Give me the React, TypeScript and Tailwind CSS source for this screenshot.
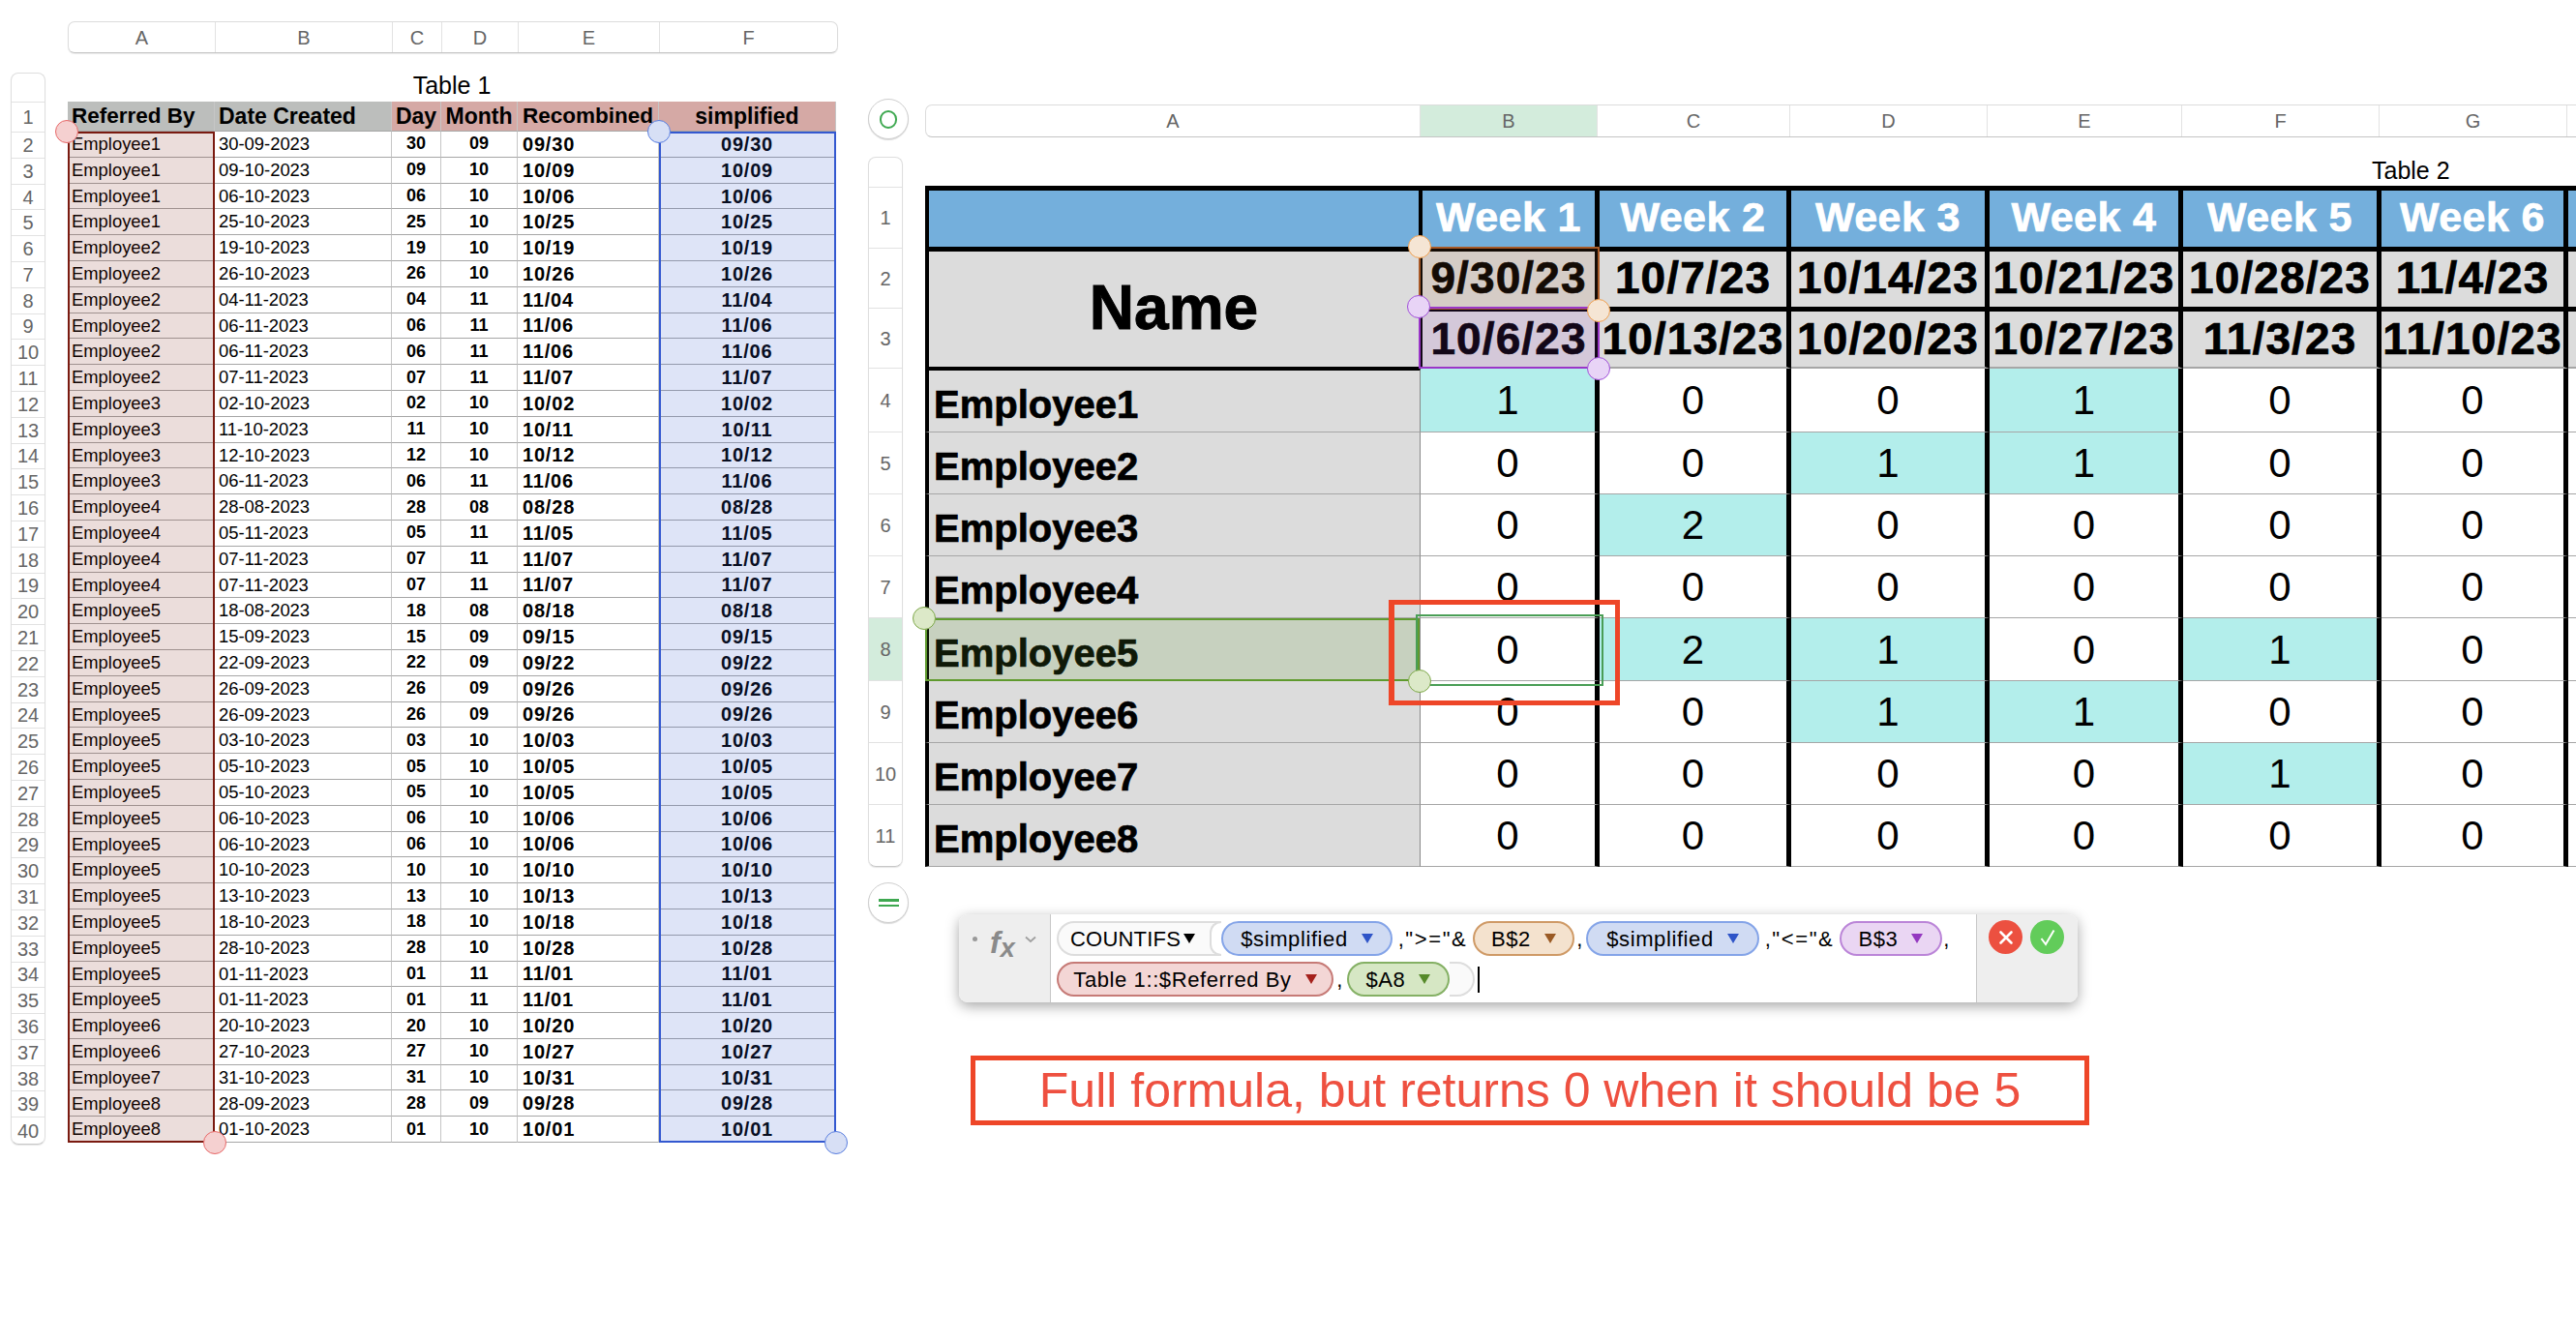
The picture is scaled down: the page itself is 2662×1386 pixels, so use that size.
import type { ReactNode } from "react"

const referrals: [string, string][] = [
  ["Employee1", "30-09-2023"],
  ["Employee1", "09-10-2023"],
  ["Employee1", "06-10-2023"],
  ["Employee1", "25-10-2023"],
  ["Employee2", "19-10-2023"],
  ["Employee2", "26-10-2023"],
  ["Employee2", "04-11-2023"],
  ["Employee2", "06-11-2023"],
  ["Employee2", "06-11-2023"],
  ["Employee2", "07-11-2023"],
  ["Employee3", "02-10-2023"],
  ["Employee3", "11-10-2023"],
  ["Employee3", "12-10-2023"],
  ["Employee3", "06-11-2023"],
  ["Employee4", "28-08-2023"],
  ["Employee4", "05-11-2023"],
  ["Employee4", "07-11-2023"],
  ["Employee4", "07-11-2023"],
  ["Employee5", "18-08-2023"],
  ["Employee5", "15-09-2023"],
  ["Employee5", "22-09-2023"],
  ["Employee5", "26-09-2023"],
  ["Employee5", "26-09-2023"],
  ["Employee5", "03-10-2023"],
  ["Employee5", "05-10-2023"],
  ["Employee5", "05-10-2023"],
  ["Employee5", "06-10-2023"],
  ["Employee5", "06-10-2023"],
  ["Employee5", "10-10-2023"],
  ["Employee5", "13-10-2023"],
  ["Employee5", "18-10-2023"],
  ["Employee5", "28-10-2023"],
  ["Employee5", "01-11-2023"],
  ["Employee5", "01-11-2023"],
  ["Employee6", "20-10-2023"],
  ["Employee6", "27-10-2023"],
  ["Employee7", "31-10-2023"],
  ["Employee8", "28-09-2023"],
  ["Employee8", "01-10-2023"],
]

// last column runs off the right edge of the window, only its end date peeks in
const weeks = ["Week 1", "Week 2", "Week 3", "Week 4", "Week 5", "Week 6", ""]
const weekStarts = ["9/30/23", "10/7/23", "10/14/23", "10/21/23", "10/28/23", "11/4/23", ""]
const weekEnds = ["10/6/23", "10/13/23", "10/20/23", "10/27/23", "11/3/23", "11/10/23", "11/17/23"]

const counts: [string, number[]][] = [
  ["Employee1", [1, 0, 0, 1, 0, 0]],
  ["Employee2", [0, 0, 1, 1, 0, 0]],
  ["Employee3", [0, 2, 0, 0, 0, 0]],
  ["Employee4", [0, 0, 0, 0, 0, 0]],
  ["Employee5", [0, 2, 1, 0, 1, 0]],
  ["Employee6", [0, 0, 1, 1, 0, 0]],
  ["Employee7", [0, 0, 0, 0, 1, 0]],
  ["Employee8", [0, 0, 0, 0, 0, 0]],
]

const table2Rows = ["h-[63px]", "h-[62px]", "h-[62px]", "h-[66px]", "h-[64px]", "h-[64px]", "h-[64px]", "h-[65px]", "h-[64px]", "h-[64px]", "h-[63px]"]

function Handle({ className }: { className: string }) {
  return <div className={`pointer-events-none absolute z-30 h-6 w-6 -translate-x-1/2 -translate-y-1/2 rounded-full border ${className}`} />
}

function Arrow({ color }: { color: string }) {
  return (
    <svg width="12" height="10" viewBox="0 0 12 10" className="shrink-0">
      <polygon points="0,0 12,0 6,10" fill={color} />
    </svg>
  )
}

function Pill({ label, color, className }: { label: string; color: string; className: string }) {
  return (
    <div className={`flex h-9 shrink-0 items-center justify-center gap-[14px] rounded-full border-2 tracking-[0.6px] ${className}`}>
      <span>{label}</span>
      <Arrow color={color} />
    </div>
  )
}

function Sep({ children, className }: { children: ReactNode; className: string }) {
  return <span className={`shrink-0 whitespace-nowrap text-center tracking-[1.6px] ${className}`}>{children}</span>
}

function Table1() {
  const cols = [
    { label: "A", w: "w-[152px]" },
    { label: "B", w: "w-[183px]" },
    { label: "C", w: "w-[51px]" },
    { label: "D", w: "w-[79px]" },
    { label: "E", w: "w-[146px]" },
    { label: "F", w: "w-[183px]" },
  ]
  const cell = "flex items-center border-b border-r border-b-[#a6a6a6] border-r-[#c6c6c6] text-black whitespace-nowrap overflow-visible"

  return (
    <div className="w-[853px] shrink-0">
      <div className="ml-[59px] flex h-[33px] w-[796px] overflow-hidden rounded-[7px] border border-[#dcdcdc] border-b-[#c4c4c4] shadow-[0_1px_1px_rgba(0,0,0,0.08)]">
        {cols.map((c) => (
          <div key={c.label} className={`flex items-center justify-center border-r border-[#e2e2e2] text-[20px] text-[#666] last:border-r-0 ${c.w}`}>
            {c.label}
          </div>
        ))}
      </div>

      <div className="mt-[20px] flex items-start">
        <div className="w-[36px] overflow-hidden rounded-[8px] border border-[#dedede] border-b-[#c8c8c8] shadow-[0_1px_1px_rgba(0,0,0,0.1)]">
          <div className="h-[30px] border-b border-[#e2e2e2]" />
          <div className="flex h-[31px] items-center justify-center border-b border-[#e2e2e2] text-[20px] text-[#666]">1</div>
          {referrals.map((_, i) => (
            <div key={i} className="flex h-[26.8px] items-center justify-center border-b border-[#e2e2e2] text-[20px] text-[#666] last:border-b-0">
              {i + 2}
            </div>
          ))}
        </div>

        <div className="ml-[23px] w-[794px]">
          <div className="flex h-[30px] items-center justify-center pb-[3px] text-[25px] text-black">Table 1</div>
          <div className="relative grid grid-cols-[152px_183px_51px_79px_146px_183px] grid-rows-[31px_repeat(39,26.8px)]">
            <div className={`${cell} bg-[#bcbebc] pl-[4px] text-[22.5px] font-bold`}>Referred By</div>
            <div className={`${cell} bg-[#bcbebc] pl-[4px] text-[23px] font-bold`}>Date Created</div>
            <div className={`${cell} justify-center bg-[#d5a9a5] text-[23px] font-bold`}>Day</div>
            <div className={`${cell} justify-center bg-[#d5a9a5] text-[23px] font-bold`}>Month</div>
            <div className={`${cell} bg-[#d5a9a5] pl-[5px] text-[22.5px] font-bold`}>Recombined</div>
            <div className={`${cell} justify-center bg-[#d5a9a5] text-[23px] font-bold`}>simplified</div>

            {referrals.map(([name, date], i) => {
              const [day, month] = date.split("-")
              return (
                <div key={i} className="contents">
                  <div className={`${cell} pl-[4px] text-[18.4px]`}>{name}</div>
                  <div className={`${cell} pl-[4px] text-[18.4px]`}>{date}</div>
                  <div className={`${cell} justify-center text-[18px] font-bold`}>{day}</div>
                  <div className={`${cell} justify-center text-[18px] font-bold`}>{month}</div>
                  <div className={`${cell} pl-[5px] text-[20px] font-bold tracking-[0.8px]`}>{`${month}/${day}`}</div>
                  <div className={`${cell} justify-center text-[20px] font-bold tracking-[0.8px]`}>{`${month}/${day}`}</div>
                </div>
              )
            })}

            <div className="pointer-events-none absolute left-0 top-[31px] h-[1045px] w-[152px] border-[2.5px] border-[#7a1a10] bg-[#7a1a10]/15" />
            <div className="pointer-events-none absolute left-[611px] top-[31px] h-[1045px] w-[183px] border-[2.5px] border-[#3358d0] bg-[#3358d0]/16" />
            <Handle className="left-[-1px] top-[31px] border-[#e86a6a] bg-[#f5d0d0]" />
            <Handle className="left-[152px] top-[1076px] border-[#e86a6a] bg-[#f5d0d0]" />
            <Handle className="left-[611px] top-[31px] border-[#5a7fe0] bg-[#d7dff5]" />
            <Handle className="left-[794px] top-[1076px] border-[#5a7fe0] bg-[#d7dff5]" />
          </div>
        </div>
      </div>
    </div>
  )
}

function Table2() {
  const weekCell = "flex items-center justify-center border-r-[5px] border-black whitespace-nowrap"
  const cols = [
    { label: "A", w: "w-[511px]", on: false },
    { label: "B", w: "w-[183px]", on: true },
    { label: "C", w: "w-[199px]", on: false },
    { label: "D", w: "w-[204px]", on: false },
    { label: "E", w: "w-[201px]", on: false },
    { label: "F", w: "w-[204px]", on: false },
    { label: "G", w: "w-[194px]", on: false },
  ]

  return (
    <div className="ml-[33px] mt-[80px] shrink-0">
      <div className="flex items-start">
        <div className="flex h-[42px] w-[42px] items-center justify-center rounded-full border border-[#cfcfcf] bg-white shadow-[0_1px_1px_rgba(0,0,0,0.15)]">
          <div className="h-[19px] w-[18px] rounded-full border-2 border-[#3ea850]" />
        </div>
        <div className="ml-[17px] mt-[6px] flex h-[34px] w-[1900px] overflow-hidden rounded-l-[7px] border border-r-0 border-[#dcdcdc] border-b-[#c4c4c4]">
          {cols.map((c) => (
            <div
              key={c.label}
              className={`flex items-center justify-center border-r border-[#e2e2e2] text-[20px] text-[#666] ${c.w} ${c.on ? "bg-[#d3ecdc]" : ""}`}
            >
              {c.label}
            </div>
          ))}
        </div>
      </div>

      <div className="mt-[18px] flex items-start">
        <div className="w-[36px] overflow-hidden rounded-[8px] border border-[#dedede] border-b-[#c8c8c8] shadow-[0_1px_1px_rgba(0,0,0,0.1)]">
          <div className="h-[31px] border-b border-[#e2e2e2]" />
          {table2Rows.map((h, i) => (
            <div
              key={i}
              className={`flex items-center justify-center border-b border-[#e2e2e2] text-[20px] text-[#666] last:border-b-0 ${h} ${i === 7 ? "bg-[#d3ecdc]" : ""}`}
            >
              {i + 1}
            </div>
          ))}
        </div>

        <div className="ml-[23px]">
          <div className="flex h-[30px] items-center pl-[1495px] text-[25px] text-black">Table 2</div>
          <div className="relative grid grid-cols-[512px_185px_198px_205px_200px_205px_193px_206px] grid-rows-[68px_62px_59px_66px_64px_64px_64px_65px_64px_64px_64px]">
            <div className="border-y-[5px] border-l-4 border-r-2 border-black bg-[#74afdc]" />
            {weeks.map((w, i) => (
              <div
                key={i}
                className={`${weekCell} border-y-[5px] bg-[#74afdc] pb-[3px] text-[43px] font-bold tracking-[0.4px] text-white [-webkit-text-stroke:0.7px_#ffffff] ${i === 0 ? "border-l-2" : ""}`}
              >
                {w}
              </div>
            ))}

            <div className="row-span-2 flex items-center justify-center border-b-2 border-l-4 border-r-2 border-black bg-[#dcdcdc] pb-[3px] text-[64px] font-bold text-black [-webkit-text-stroke:1px_#000000]">
              Name
            </div>
            {weekStarts.map((d, i) => (
              <div
                key={i}
                className={`${weekCell} border-b-[5px] bg-[#dcdcdc] pb-[3px] text-[46px] font-bold tracking-[1.1px] text-black [-webkit-text-stroke:0.7px_#000000] ${i === 0 ? "border-l-2" : ""}`}
              >
                {d}
              </div>
            ))}
            {weekEnds.map((d, i) => (
              <div
                key={i}
                className={`${weekCell} border-b-2 border-b-[#a6a6a6] bg-[#dcdcdc] text-[46px] font-bold tracking-[1.1px] text-black [-webkit-text-stroke:0.7px_#000000] ${i === 0 ? "border-l-2" : ""}`}
              >
                {d}
              </div>
            ))}

            {counts.map(([name, values], r) => (
              <div key={name} className="contents">
                <div
                  className={`flex items-end border-b border-l-4 border-r border-b-[#a6a6a6] border-l-black border-r-[#888888] bg-[#dcdcdc] pb-[8px] pl-[5px] text-[40px] font-bold leading-[40px] text-black [-webkit-text-stroke:0.7px_#000000] ${r === 0 ? "border-t-2 border-t-black" : ""}`}
                >
                  {name}
                </div>
                {values.map((v, i) => (
                  <div
                    key={i}
                    className={`flex items-center justify-center border-b border-r-[5px] border-b-[#a6a6a6] border-r-black text-[42px] text-black ${v > 0 ? "bg-[#b3eeeb]" : "bg-white"}`}
                  >
                    {v}
                  </div>
                ))}
                <div className="border-b border-b-[#a6a6a6]" />
              </div>
            ))}

            <div className="pointer-events-none absolute left-[510px] top-[63px] h-[65px] w-[187px] border-[2.5px] border-[#a85a28] bg-[#a85a28]/12" />
            <div className="pointer-events-none absolute left-[510px] top-[125px] h-[64px] w-[187px] border-[2.5px] border-[#9a36c8] bg-[#9a36c8]/12" />
            <div className="pointer-events-none absolute left-0 top-[447px] h-[65px] w-[511px] border-2 border-[#5f9a2e] bg-[#5f9a2e]/16" />
            <div className="pointer-events-none absolute left-[507px] top-[443px] h-[74px] w-[194px] border-2 border-[#4a9e56]" />
            <div className="pointer-events-none absolute left-[479px] top-[428px] z-20 h-[109px] w-[239px] border-y-[5px] border-l-[6px] border-r-[5px] border-[#ee4628]" />
            <Handle className="left-[511px] top-[63px] border-[#f0a050] bg-[#f5e5d4]" />
            <Handle className="left-[696px] top-[129px] border-[#f0a050] bg-[#f5e5d4]" />
            <Handle className="left-[510px] top-[125px] border-[#a050d8] bg-[#e8d4f6]" />
            <Handle className="left-[696px] top-[189px] border-[#a050d8] bg-[#e8d4f6]" />
            <Handle className="left-[-1px] top-[447px] border-[#7ea84a] bg-[#dce9c8]" />
            <Handle className="left-[511px] top-[512px] border-[#7ea84a] bg-[#dce9c8]" />
          </div>
        </div>
      </div>

      <div className="mt-[16px] flex items-start">
        <div className="flex h-[42px] w-[42px] flex-col items-center justify-center gap-[3px] rounded-full border border-[#cfcfcf] bg-white shadow-[0_1px_1px_rgba(0,0,0,0.15)]">
          <div className="h-[2.5px] w-[21px] bg-[#3ea850]" />
          <div className="h-[2.5px] w-[21px] bg-[#3ea850]" />
        </div>
        <FormulaBar />
      </div>

      <div className="ml-[106px] mt-[55px] flex h-[72px] w-[1156px] items-center justify-center border-[5px] border-[#ee4628] text-[50px] text-[#ee5040]">
        Full formula, but returns 0 when it should be 5
      </div>
    </div>
  )
}

function FormulaBar() {
  return (
    <div className="ml-[52px] mt-[33px] flex h-[91px] w-[1156px] overflow-hidden rounded-[9px] bg-white text-[22px] text-black shadow-[0_4px_14px_rgba(0,0,0,0.35)]">
      <div className="flex w-[95px] shrink-0 items-start border-r border-[#c8c8c8] bg-[#eeeeee] pl-[14px] pt-[13px]">
        <div className="mt-[10px] h-[5px] w-[5px] rounded-full bg-[#999]" />
        <div className="ml-[13px] flex items-start font-bold italic leading-none text-[#8a8a8a]">
          <span className="text-[32px]">f</span>
          <span className="mt-[9px] text-[27px]">x</span>
        </div>
        <svg width="14" height="8" viewBox="0 0 14 8" className="ml-[9px] mt-[9px]">
          <path d="M2 1.5 L7 6 L12 1.5" fill="none" stroke="#a0a0a0" strokeWidth="1.8" />
        </svg>
      </div>

      <div className="flex min-w-0 flex-1 flex-col gap-[6px] pl-[6px] pt-[7px]">
        <div className="flex h-9 items-center">
          <div className="relative flex h-9 w-[170px] shrink-0 items-center gap-[3px] rounded-l-full border-y-2 border-l-2 border-[#dddddd] bg-[#fafafa] pl-[12px] tracking-[0.2px]">
            <span>COUNTIFS</span>
            <Arrow color="#000000" />
            <div className="absolute right-0 top-[-2px] h-9 w-[12px] rounded-l-full border-y-2 border-l-2 border-[#dddddd] bg-white" />
          </div>
          <Pill label="$simplified" color="#2f55c8" className="w-[177px] border-[#84a4e8] bg-[#d0dbf3]" />
          <Sep className="w-[83px]">,"&gt;="&amp;</Sep>
          <Pill label="B$2" color="#9a5a24" className="w-[105px] border-[#cf9a66] bg-[#f4e2ce]" />
          <Sep className="w-[12px]">,</Sep>
          <Pill label="$simplified" color="#2f55c8" className="w-[179px] border-[#84a4e8] bg-[#d0dbf3]" />
          <Sep className="w-[83px]">,"&lt;="&amp;</Sep>
          <Pill label="B$3" color="#9438c0" className="w-[106px] border-[#bb85d8] bg-[#ead6f3]" />
          <Sep className="w-[10px]">,</Sep>
        </div>
        <div className="flex h-9 items-center">
          <Pill label="Table 1::$Referred By" color="#a5211c" className="w-[286px] border-[#c67a76] bg-[#f3d6d5]" />
          <Sep className="w-[14px]">,</Sep>
          <Pill label="$A8" color="#568a2a" className="w-[106px] border-[#84b064] bg-[#d6e7c4]" />
          <div className="h-9 w-[26px] shrink-0 rounded-r-full border-y-2 border-r-2 border-[#dddddd] bg-[#fafafa]" />
          <div className="ml-[3px] h-[27px] w-[2px] bg-black" />
        </div>
      </div>

      <div className="flex w-[105px] shrink-0 items-start gap-[8px] border-l border-[#c8c8c8] bg-[#eeeeee] pl-[12px] pt-[6px]">
        <div className="flex h-[35px] w-[35px] items-center justify-center rounded-full bg-[#ec5040]">
          <svg width="16" height="16" viewBox="0 0 16 16">
            <path d="M2.5 2.5 L13.5 13.5 M13.5 2.5 L2.5 13.5" fill="none" stroke="#ffffff" strokeWidth="2.6" strokeLinecap="round" />
          </svg>
        </div>
        <div className="flex h-[35px] w-[35px] items-center justify-center rounded-full bg-[#62cc5a]">
          <svg width="18" height="20" viewBox="0 0 18 20">
            <path d="M2.5 11 L7 17 L15.5 2.5" fill="none" stroke="#ffffff" strokeWidth="2" />
          </svg>
        </div>
      </div>
    </div>
  )
}

export default function App() {
  return (
    <div className="flex h-[1386px] w-[2662px] items-start overflow-hidden bg-white pl-[11px] pt-[22px] font-['Liberation_Sans',Arial,sans-serif]">
      <Table1 />
      <Table2 />
    </div>
  )
}
